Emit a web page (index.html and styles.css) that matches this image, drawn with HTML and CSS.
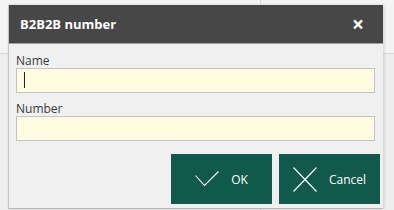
FILE: index.html
```html
<!DOCTYPE html>
<html lang="en">

<head>
    <meta charset="UTF-8" />
    <title>B2B2B number</title>
    <link rel="stylesheet" href="styles.css">
</head>

<body>
    <div class="dialog">
        <div class="dialog-title">
            <span>B2B2B number</span>
            <span class="close-btn">&times;</span>
        </div>
        <div class="dialog-body">
            <label class="field-label">Name</label>
            <div class="field"><span class="caret"></span></div>
            <label class="field-label">Number</label>
            <div class="field"></div>
            <div class="actions">
                <button class="action-btn">
                    <svg width="24" height="16" viewBox="0 0 24 16">
                        <path d="M0.5 4.5 L9.5 14.5 L23.5 0.5" fill="none" stroke="#fff" stroke-width="1.1" />
                    </svg>
                    <span>OK</span>
                </button>
                <button class="action-btn">
                    <svg width="24" height="25" viewBox="0 0 24 25">
                        <path d="M0.5 0.5 L23.5 24.5 M23.5 0.5 L0.5 24.5" fill="none" stroke="#fff" stroke-width="1.1" />
                    </svg>
                    <span>Cancel</span>
                </button>
            </div>
        </div>
    </div>
</body>

</html>
```

FILE: styles.css
```css
* {
    box-sizing: border-box;
    margin: 0;
    padding: 0;
}

body {
    width: 394px;
    height: 210px;
    overflow: hidden;
    font-family: 'Open Sans', 'Noto Sans', sans-serif;
    background:
        linear-gradient(to right, transparent 260px, #dcdcdc 260px, #dcdcdc 261px, transparent 261px),
        linear-gradient(to bottom, #f4f4f4 0, #f4f4f4 53px, #dadada 53px, #dadada 54px, #eeeeee 54px);
    padding: 5px 0 0 8px;
}

.dialog {
    width: 375px;
    height: 204px;
    background: #f0f0f0;
    border-left: 1px solid #c4c4c4;
    border-bottom: 1px solid #b8b8b8;
    box-shadow: 1px 0 3px rgba(0, 0, 0, 0.15);
    display: flex;
    flex-direction: column;
}

.dialog-title {
    height: 39px;
    background: #474747;
    border-bottom: 1px solid #a0a0a0;
    color: #fff;
    font-size: 13px;
    font-weight: bold;
    display: flex;
    align-items: center;
    justify-content: space-between;
    padding: 0 19px 0 11px;
}

.close-btn {
    font-size: 21px;
    font-weight: bold;
    line-height: 1;
}

.dialog-body {
    padding: 9px 8px 0 7px;
    display: flex;
    flex-direction: column;
}

.field-label {
    font-size: 12px;
    line-height: 15px;
    color: #3a3a3a;
}

.field {
    height: 25px;
    margin-bottom: 8px;
    background: #fffde1;
    border: 1px solid #c4c4c4;
    padding: 3px 7px;
}

.caret {
    display: block;
    width: 1px;
    height: 16px;
    background: #222;
}

.actions {
    display: flex;
    justify-content: flex-end;
    gap: 7px;
    margin: 5px -5px 0 0;
}

.action-btn {
    width: 101px;
    height: 50px;
    border: none;
    background: #11594a;
    color: #fff;
    font-family: inherit;
    font-size: 12px;
    display: flex;
    align-items: center;
    justify-content: center;
    gap: 12px;
}
```
